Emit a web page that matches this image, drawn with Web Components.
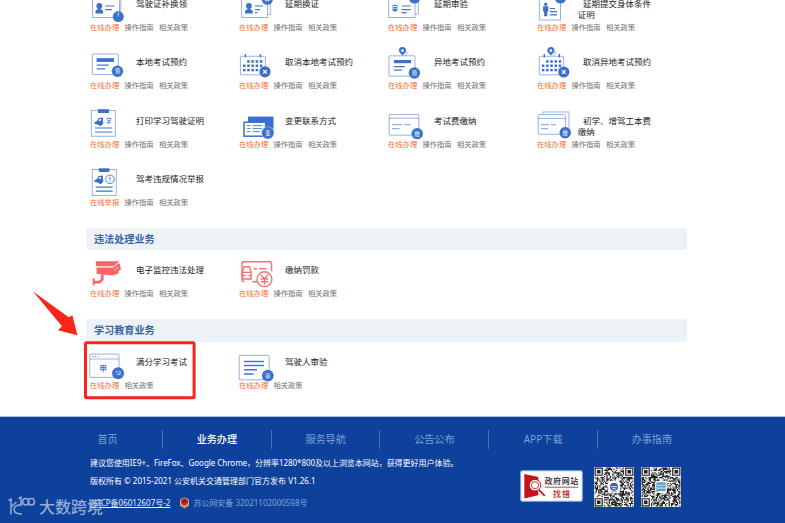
<!DOCTYPE html>
<html lang="zh-CN">
<head>
  <meta charset="UTF-8" />
  <meta name="viewport" content="width=device-width, initial-scale=1.0" />
  <title>业务办理</title>
  <style>
    body {
      position: relative;
      width: 785px;
      height: 523px;
      margin: 0;
      overflow: hidden;
      background: #fff;
      font-family: "Noto Sans", "Noto Sans CJK SC", sans-serif;
    }

    main {
      height: 417px;
      padding-left: 86px;
      overflow: hidden;
    }

    .first {
      margin-top: -16.5px;
    }
  </style>
</head>
<body>
  <main>
    <service-group class="first">
      <service-item icon="replace">驾驶证补换领</service-item>
      <service-item icon="renew">延期换证</service-item>
      <service-item icon="delay">延期审验</service-item>
      <service-item icon="body">延期提交身体条件证明</service-item>
      <service-item icon="book">本地考试预约</service-item>
      <service-item icon="cancel">取消本地考试预约</service-item>
      <service-item icon="remote">异地考试预约</service-item>
      <service-item icon="remote-cancel">取消异地考试预约</service-item>
      <service-item icon="print">打印学习驾驶证明</service-item>
      <service-item icon="contact">变更联系方式</service-item>
      <service-item icon="fee">考试费缴纳</service-item>
      <service-item icon="fees">初学、增驾工本费缴纳</service-item>
      <service-item icon="report" action="在线举报">驾考违规情况举报</service-item>
    </service-group>
    <service-group heading="违法处理业务">
      <service-item icon="camera">电子监控违法处理</service-item>
      <service-item icon="fine">缴纳罚款</service-item>
    </service-group>
    <service-group heading="学习教育业务">
      <service-item icon="study" short>满分学习考试</service-item>
      <service-item icon="driver" short>驾驶人审验</service-item>
    </service-group>
  </main>
  <site-footer></site-footer>
  <guide-mark></guide-mark>
  <water-mark>大数跨境</water-mark>
  <script>
    const badge = (x, y, t, r = 5.7) =>
      `<circle class="f" cx="${x}" cy="${y}" r="${r}"/><text x="${x}" y="${y + 1.9}" font-size="5.2" fill="#fff">${t}</text>`;
    const cross = (x, y) =>
      `<circle class="f" cx="${x}" cy="${y}" r="5.6"/><path d="M${x - 1.8} ${y - 1.8}l3.6 3.6m0-3.6l-3.6 3.6" stroke="#fff" stroke-width="1.2"/>`;
    const person = '<circle class="f" cx="13.3" cy="22" r="2.9"/><path class="f" d="M9.4 29.5v-1.8q0-2 2.4-2.5l1-1.2h1l1 1.2q2.4.5 2.4 2.5v1.8z"/>';
    const pin = (x) =>
      `<path class="f" fill-rule="evenodd" d="M${x} 13.8c-1.2-2-3.6-3-3.6-5.2a3.6 3.6 0 0 1 7.2 0c0 2.2-2.4 3.2-3.6 5.2zm0-6.6a1.4 1.4 0 1 0 0 2.8a1.4 1.4 0 1 0 0-2.8"/><path class="l" d="M${x + 4.4} 9.5q1.2 1.2-2 4.2"/>`;
    const car = '<path class="f" d="M8.5 21.3l2.4-1.3 1.8-3 4.2-.6v3l.5 3.6-1.2.6a1.8 1.8 0 0 1-3.4.3l-1.6-.5-2.7-.3z"/><path d="M13.2 18.3l1.9-.2v1.6h-2.7z" fill="#fff"/>';
    const calendar = (x, w) => {
      let s = `<rect class="l" x="${x}" y="14.3" width="${w}" height="18.5" rx=".8"/><path class="s" stroke-width="1.4" d="M${x + 5} 12v3.6m15-3.6v3.6"/>`;
      for (let r = 0; r < 3; r++)
        for (let c = r ? 0 : 1; c < 5; c++)
          s += `<rect class="f" x="${x + 2.6 + c * 4.2}" y="${18.2 + r * 4.3}" width="2.5" height="2.5"/>`;
      return s;
    };

    // every icon sits in the top left of its item, 1 unit = 1px
    const icons = {
      replace: `<rect class="l" x="6.5" y="9.5" width="27" height="24"/><path class="l" d="M34.8 10v17"/>${person}
        <path class="s" d="M19.3 22h9m-9 3.6h6.5"/><circle class="f" cx="32.3" cy="32.6" r="5.5"/><path d="M32.3 28v4.5" stroke="#fff" stroke-width=".7"/>`,
      renew: `<rect class="l" x="6.7" y="9.5" width="25.8" height="24"/><path class="l" d="M35.3 12v18.5h-2.5"/>
        <g transform="translate(.6)">${person}</g><path class="s" d="M20 22h8m-8 3.6h5m-5 3h2.4"/>${cross(32.3, 15.2)}`,
      delay: `<rect class="l" x="4.7" y="9.5" width="26.3" height="24"/><path class="l" d="M34.3 12v18h-3"/>
        <text class="f" x="10.8" y="26.7" font-size="6.3" font-weight="700">审</text><path class="s" d="M17.7 22h9m-9 3.6h9m-9 3h5"/>${cross(30.5, 14)}`,
      body: `<rect class="l" x="6.3" y="9.5" width="21.3" height="26.5"/><circle class="f" cx="12.7" cy="20.2" r="1.6"/>
        <path class="f" d="M10.1 22.2h5.2v5.2h-1v4.8h-3.2v-4.8h-1z"/><path class="s" d="M17 24.5h5m-5 3.2h7m-7 3.2h7"/>${cross(27.5, 14)}`,
      book: `<rect class="l" x="6.3" y="12" width="26" height="20.6" rx=".8"/><rect class="f" x="10.6" y="16.2" width="17.4" height="3.7"/>
        <path class="s" d="M10.7 23.2h12m-12 3.6h8.4"/>${badge(31.5, 29.3, '预')}`,
      cancel: `${calendar(5.4, 25)}${cross(30, 29.8)}`,
      remote: `<rect class="l" x="5" y="13.8" width="26" height="20.4" rx=".8"/>${pin(18.5)}<rect class="f" x="9.9" y="18" width="17.2" height="3.2"/>
        <path class="s" d="M10 24.6h11m-11 3.6h8"/>${badge(30.4, 31, '预')}`,
      'remote-cancel': `${calendar(6.3, 24.4)}${pin(17.9)}${cross(30.8, 30)}`,
      print: `<rect class="l" x="5.3" y="9.6" width="24" height="25.6"/><path class="f" d="M12 8.2h11v3.8H12z"/>${car}
        <text class="f" x="22.7" y="21.9" font-size="5.4" font-weight="700">学</text><path class="s" d="M9 27h17.3m-17.3 4h17.3"/>`,
      contact: `<path class="f" d="M13 15.6h25.5v17H13z"/><rect x="9" y="21.2" width="21.6" height="14" fill="#fff" stroke="#3b70cb" stroke-width="1.5"/>
        <path class="s" stroke-width=".9" d="M12 24.6h3.6m2 0h9.5m-15.1 3h3.6m2 0h9.5m-15.1 3h3.6m2 0h7"/><circle cx="32.8" cy="31.8" r="6.4" fill="#b9cdef"/>${badge(32.8, 31.8, '变', 5.9)}`,
      fee: `<rect class="l" x="5.2" y="13.6" width="29.6" height="20.6" rx=".8"/><path class="l" d="M5.2 17.2h29.6"/>
        <path class="s" stroke-width=".7" d="M8 23.7h10.2m2 0h6m-18.2 4h7.6"/>${badge(33.2, 32.6, '缴')}`,
      fees: `<rect class="l" x="10" y="11" width="26" height="19"/><rect class="l" style="fill:#fff" x="5.2" y="13.6" width="27.2" height="19.7" rx=".8"/>
        <path class="l" d="M5.2 17.4h27.2"/><path class="s" stroke-width=".7" d="M8 23.7h8m2 0h5m-15 4h7"/>${badge(32.2, 31.8, '缴')}`,
      report: `<rect class="l" x="6.2" y="10.4" width="24" height="26.2"/><path class="f" d="M12.8 9.3h10.6v3.7H12.8z"/>${car}
        <circle class="s" cx="24" cy="20.3" r="4.3" stroke-width=".9"/><path class="s" stroke-width="1" d="M24 17.6v3.5m0 .8v1.1"/><path class="s" d="M9.7 28.1h17m-17 4.1h17"/>`,
      camera: `<g fill="#f96468"><path d="M9.8 11.2h23.8l-6 5.1H9.8z"/><path d="M10.6 17.4h16.6l5.6-4.4 1.1 1 1 5.8-2 .8-.6 2.8-5.8 2.2-15.9-1.7z"/>
        <path d="M6.7 28.3h1.9v7H6.7z"/></g><path d="M8 32.2h5.3l3-2.8v-5.2" fill="none" stroke="#f96468" stroke-width="2.7"/><path d="M28.2 20.5l4.4-3.3" stroke="#fff" stroke-width=".7"/>`,
      fine: `<g fill="none" stroke="#f87073" stroke-width="1.4"><path d="M9.5 31.5H9q-2 0-2-2V14.2q0-2.4 2.4-2.4h24.8q2.4 0 2.4 2.4v7M17.4 31.8h5"/>
        <path d="M7.5 22l1.6-5.2h5.2l1.8 5.2v7H7.5zM7.5 22.4h8.8M8.2 25.6h2.3m3 0h2.3M19 18.7h3.2m2.2 0h7"/><circle cx="29.5" cy="29.2" r="7.4" fill="#fff"/>
        <path d="M26 24.7l3.5 4 3.5-4M29.5 28.7v6M25.8 29h7.4M25.8 31.7h7.4"/></g>`,
      study: `<rect class="l" x="3.8" y="12" width="29.2" height="23.4" rx=".8"/><path class="l" d="M3.8 17h29.2"/><path class="s" stroke-dasharray="1 1.6" stroke-width="1" d="M6.2 14.6h6.4"/>
        <text class="f" x="17.2" y="29.4" font-size="7.2" font-weight="700">申</text>${badge(32.1, 31.3, '12', 6)}`,
      driver: `<rect class="l" x="4.2" y="13.4" width="30" height="24.4" rx=".8"/><path class="s" stroke-width="1.5" d="M9 19.6h20m-20 4h20m-20 4.2h13m-13 4.1h9.6"/>${badge(32.8, 33.6, '审', 5.9)}`,
    };

    customElements.define('service-group', class extends HTMLElement {
      connectedCallback() {
        const heading = this.getAttribute('heading');
        this.attachShadow({ mode: 'open' }).innerHTML = `
          <style>
            :host { display: block; }
            h2 {
              width: 593px;
              height: 22.5px;
              margin: 10.3px 0 0;
              padding-left: 8px;
              border-radius: 2px;
              background: #edf2f7;
              color: #3565a4;
              font-size: 10.15px;
              line-height: 22.5px;
            }
            .grid {
              display: grid;
              grid-template-columns: repeat(4, 149px);
              grid-auto-rows: 58.5px;
            }
          </style>
          ${heading ? `<h2>${heading}</h2>` : ''}
          <div class="grid"><slot></slot></div>
        `;
      }
    });

    customElements.define('service-item', class extends HTMLElement {
      connectedCallback() {
        const action = this.getAttribute('action') || '在线办理';
        this.attachShadow({ mode: 'open' }).innerHTML = `
          <style>
            :host {
              display: grid;
              grid-template-columns: 44.7px 78px;
              grid-template-rows: 38px 11px;
              white-space: nowrap;
            }
            svg { display: block; overflow: visible; }
            .f { fill: #3b70cb; }
            .l { fill: none; stroke: #7ba0dc; stroke-width: .8; }
            .s { fill: none; stroke: #4376cc; }
            .s:not([stroke-width]) { stroke-width: 1.2; }
            text { text-anchor: middle; }
            .title {
              padding-top: 14px;
              font-size: 8.5px;
              line-height: 11.8px;
              text-indent: 5.3px;
              color: #222;
              white-space: normal;
            }
            .links {
              display: flex;
              grid-column: 1 / 3;
              gap: 5.3px;
              padding-left: 4px;
              font-size: 7.3px;
              line-height: 11px;
              color: #707070;
              z-index: 1;
            }
            .links :first-child { color: #fb6c2e; }
          </style>
          <svg width="44" height="40">${icons[this.getAttribute('icon')]}</svg>
          <div class="title"><slot></slot></div>
          <div class="links">
            <span>${action}</span>
            ${this.hasAttribute('short') ? '' : '<span>操作指南</span>'}
            <span>相关政策</span>
          </div>
        `;
      }
    });

    // 33x33 module square with three finder patterns and a logo in the middle
    customElements.define('qr-code', class extends HTMLElement {
      connectedCallback() {
        let seed = Number(this.getAttribute('seed'));
        let d = '';
        for (let y = 0; y < 33; y++) {
          for (let x = 0; x < 33; x++) {
            seed = (seed * 16807) % 2147483647;
            const finder = (x < 8 || x > 24) && y < 8 || x < 8 && y > 24;
            if (!finder && seed / 2147483647 < 0.5) d += `M${x} ${y}h1v1h-1z`;
          }
        }
        const finder = (x, y) =>
          `<path d="M${x} ${y}h7v7h-7zM${x + 1} ${y + 1}v5h5v-5zM${x + 2} ${y + 2}h3v3h-3z"/>`;
        const logo = this.hasAttribute('app')
          ? '<rect x="12.5" y="12.5" width="8" height="7.5" fill="#5ea2ce"/><path d="M12.5 17.5h8M13 15h7" stroke="#b8dced"/><circle cx="13.7" cy="19.6" r="1.2" fill="#73bd6a"/>'
          : '<circle cx="16.5" cy="16.2" r="3.4" fill="#4655b2"/><path d="M14 16.2h5M15 18h3" stroke="#fff" stroke-width=".8"/><path d="M14 20.5h5" stroke="#8993cc" stroke-width=".8"/>';
        this.attachShadow({ mode: 'open' }).innerHTML = `
          <style>:host, svg { display: block; width: 40px; height: 40px; }</style>
          <svg viewBox="-.5 -.5 34 34">
            <rect x="-.5" y="-.5" width="34" height="34" fill="#eee"/>
            <g fill="#252525" fill-rule="evenodd"><path d="${d}"/>${finder(0, 0)}${finder(26, 0)}${finder(0, 26)}</g>
            <rect x="11.5" y="11.5" width="10" height="10" rx="1" fill="#fff"/>${logo}
          </svg>
        `;
      }
    });

    customElements.define('error-badge', class extends HTMLElement {
      connectedCallback() {
        this.attachShadow({ mode: 'open' }).innerHTML = `
          <style>:host, svg { display: block; width: 63px; height: 32px; } text { text-anchor: middle; font-weight: 500; }</style>
          <svg>
            <rect x=".7" y=".7" width="61.6" height="30.6" rx="1.5" fill="#fff" stroke="#84aae3" stroke-width="1.1"/>
            <path d="M4.3 4l14 3v18.3l-14 3.2z" fill="#c3151b"/>
            <circle cx="15" cy="15.2" r="5.8" fill="#fff" stroke="#c3151b" stroke-width="1"/>
            <circle cx="15" cy="15.2" r="3.6" fill="none" stroke="#d0383d" stroke-width="1"/>
            <path d="M19 19.8l5.6 5.8" stroke="#fff" stroke-width="3"/><path d="M19 19.8l5.8 6" stroke="#c3151b" stroke-width="1.7"/>
            <text x="41.7" y="13.8" font-size="8" letter-spacing=".6" fill="#222">政府网站</text>
            <path d="M24.8 17.2h33.5" stroke="#c3151b" stroke-width=".8"/>
            <text x="42" y="26.5" font-size="8" letter-spacing="1" fill="#c3151b">找错</text>
          </svg>
        `;
      }
    });

    customElements.define('site-footer', class extends HTMLElement {
      connectedCallback() {
        const nav = ['首页', '业务办理', '服务导航', '公告公布', 'APP下载', '办事指南'];
        this.attachShadow({ mode: 'open' }).innerHTML = `
          <style>
            :host {
              display: block;
              box-sizing: border-box;
              height: 106px;
              padding-top: 13px;
              background: #0e419c;
              box-shadow: 0 -.6px 0 #7795c8;
              color: #fff;
            }
            nav {
              display: grid;
              grid-template-columns: repeat(6, 108.75px);
              margin-left: 53.2px;
              height: 18px;
              font-size: 10.1px;
              line-height: 19px;
              text-align: center;
              color: #7ba0da;
            }
            nav span + span { border-left: 1px solid #4a70b5; }
            nav .on { color: #fff; font-weight: 500; }
            .info {
              display: flex;
              padding: 5.5px 0 0 90px;
              font-size: 8px;
              line-height: 18px;
              white-space: nowrap;
            }
            .text { width: 430px; }
            .text > div:first-child { letter-spacing: -.04px; }
            .record { display: flex; padding-top: 4px; color: #81a2da; }
            .record u { color: #e4ecfa; }
            .record svg { margin: 3px 3px 0 9px; }
            .pics { display: flex; align-items: center; height: 55px; padding-top: 5.5px; }
            error-badge { margin: -1px 10.5px 0 0; }
            qr-code + qr-code { margin-left: 7.7px; }
          </style>
          <nav>${nav.map((n, i) => `<span class="${i === 1 ? 'on' : ''}">${n}</span>`).join('')}</nav>
          <div class="info">
            <div class="text">
              <div>建议您使用IE9+、FireFox、Google Chrome，分辨率1280*800及以上浏览本网站，获得更好用户体验。</div>
              <div>版权所有 © 2015-2021 公安机关交通管理部门官方发布 V1.26.1</div>
              <div class="record">
                <u>苏ICP备06012607号-2</u>
                <svg width="11" height="12"><path d="M1 5.5L1.6 2 5.5.5 9.4 2l.6 3.5L9.5 9 5.5 11.5 1.5 9z" fill="#e8bf7c"/><circle cx="5.5" cy="4.8" r="3.6" fill="#c92c22"/><path d="M3 4.8h5M4 3h3" stroke="#422" stroke-width="1"/><path d="M2.5 9.4q3 1.6 6 0" stroke="#b45a30" fill="none"/></svg>
                <span>苏公网安备 32021102000598号</span>
              </div>
            </div>
            <div class="pics">
              <error-badge></error-badge>
              <qr-code seed="7351"></qr-code>
              <qr-code seed="9127" app></qr-code>
            </div>
          </div>
        `;
      }
    });

    // red arrow and frame laid over the page
    customElements.define('guide-mark', class extends HTMLElement {
      connectedCallback() {
        this.attachShadow({ mode: 'open' }).innerHTML = `
          <style>
            :host { position: absolute; left: 30px; top: 288px; z-index: 2; }
            svg { display: block; }
          </style>
          <svg width="170" height="114" fill="#fb2418">
            <path d="M3 3.5L38.7 29.3l3.7-2L47.4 47.3 28 42.2l4-4z"/>
            <rect x="55.5" y="54.7" width="108.6" height="55" rx="1" fill="none" stroke="#fa241b" stroke-width="3"/>
          </svg>
        `;
      }
    });

    customElements.define('water-mark', class extends HTMLElement {
      connectedCallback() {
        this.attachShadow({ mode: 'open' }).innerHTML = `
          <style>
            :host {
              position: absolute;
              left: 8px;
              top: 496px;
              display: flex;
              gap: 3px;
              color: #a6badd;
              font-size: 16px;
              font-weight: 500;
              line-height: 23px;
              opacity: .88;
            }
          </style>
          <svg width="28" height="21" fill="none" stroke="currentColor" stroke-width="1.5">
            <path d="M.5 4.5L3 3v15.5M3 11l5.5-5M14 8.5Q6 9 6 13.2 6 18 14 18M10.5 2.5L13 1.2v9"/>
            <circle cx="17.8" cy="5.8" r="3.2"/><circle cx="23.3" cy="5.8" r="3.2"/>
          </svg>
          <slot></slot>
        `;
      }
    });
  </script>
</body>
</html>
